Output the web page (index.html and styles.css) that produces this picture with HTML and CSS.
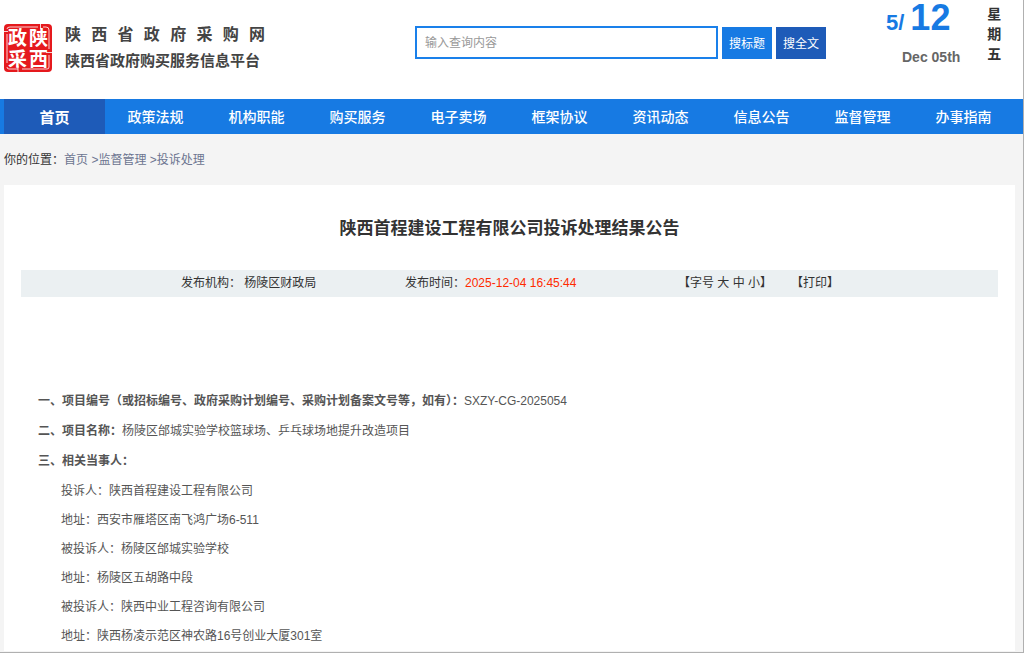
FILE: index.html
```html
<!DOCTYPE html>
<html lang="zh-CN">
<head>
    <meta charset="UTF-8">
    <meta name="viewport" content="width=device-width, initial-scale=1.0">
    <title>陕西省政府采购网</title>
    <link rel="stylesheet" href="styles.css">
</head>
<body>
    <header class="header">
        <div class="logo">
            <svg class="seal" viewBox="0 0 48 48" width="48" height="48">
                <rect x="0" y="0" width="48" height="48" rx="4" fill="#e5191d"/>
                <path d="M0 7.500H4M3 10V39M3 43Q3 45 5 45H14M14 42V48M18 45H43Q45 45 45 43V31M42 28.500H48M45 25V6Q45 3 42 3H39M36.500 0V5M34 3H6Q3 3 3 5" fill="none" stroke="#fff" stroke-width="1" stroke-opacity="0.8"/>
                <g class="seal-text">
                    <text x="4" y="21">政</text>
                    <text x="25" y="21">陕</text>
                    <text x="4" y="42">采</text>
                    <text x="25" y="42">西</text>
                </g>
            </svg>
            <div class="logo-text">
                <p class="site-name">陕 西 省 政 府 采 购 网</p>
                <p>陕西省政府购买服务信息平台</p>
            </div>
        </div>

        <form class="search">
            <input type="text" class="search-input" placeholder="输入查询内容" aria-label="输入查询内容">
            <button type="button" class="btn">搜标题</button>
            <button type="button" class="btn btn-dark">搜全文</button>
        </form>

        <div class="date">
            <div class="date-main">
                <p class="day">5/<span class="month">12</span></p>
                <p class="date-en">Dec 05th</p>
            </div>
            <p class="weekday">星期五</p>
        </div>
    </header>

    <nav class="nav">
        <a href="#" class="active">首页</a>
        <a href="#">政策法规</a>
        <a href="#">机构职能</a>
        <a href="#">购买服务</a>
        <a href="#">电子卖场</a>
        <a href="#">框架协议</a>
        <a href="#">资讯动态</a>
        <a href="#">信息公告</a>
        <a href="#">监督管理</a>
        <a href="#">办事指南</a>
    </nav>

    <div class="breadcrumb">
        你的位置：<a href="#">首页</a> <span>&gt;</span><a href="#">监督管理</a> <span>&gt;</span><a href="#">投诉处理</a>
    </div>

    <main class="main">
        <h1>陕西首程建设工程有限公司投诉处理结果公告</h1>

        <div class="info">
            <span>发布机构： 杨陵区财政局</span>
            <span>发布时间：<time class="time">2025-12-04 16:45:44</time></span>
            <span>【字号 <a href="#">大</a> <a href="#">中</a> <a href="#">小</a>】</span>
            <span>【<a href="#">打印</a>】</span>
        </div>

        <article class="content">
            <p class="item"><strong>一、项目编号（或招标编号、政府采购计划编号、采购计划备案文号等，如有）：</strong>SXZY-CG-2025054</p>
            <p class="item"><strong>二、项目名称：</strong>杨陵区邰城实验学校篮球场、乒乓球场地提升改造项目</p>
            <p class="item"><strong>三、相关当事人：</strong></p>
            <div class="parties">
                <p>投诉人：陕西首程建设工程有限公司</p>
                <p>地址：西安市雁塔区南飞鸿广场6-511</p>
                <p>被投诉人：杨陵区邰城实验学校</p>
                <p>地址：杨陵区五胡路中段</p>
                <p>被投诉人：陕西中业工程咨询有限公司</p>
                <p>地址：陕西杨凌示范区神农路16号创业大厦301室</p>
            </div>
        </article>
    </main>
</body>
</html>
```
FILE: styles.css
```css
* {
    box-sizing: border-box;
}
body {
    margin: 0;
    min-height: 100vh;
    font-family: "Liberation Sans", "Noto Sans CJK SC", sans-serif;
    font-size: 12px;
    color: #333;
    background-color: #f4f4f4;
    border-right: 1px solid #b0b0b0;
    border-bottom: 1px solid #b0b0b0;
}
p, h1 {
    margin: 0;
}
a {
    color: inherit;
    text-decoration: none;
}

/* 顶部 */
.header {
    display: grid;
    grid-template-columns: 411px 1fr 138px;
    height: 99px;
    padding-left: 4px;
    background-color: #fff;
}
.logo {
    display: flex;
    align-items: flex-start;
    gap: 13px;
    padding-top: 24px;
}
.seal-text {
    font-size: 19px;
    font-weight: bold;
    fill: #fff;
}
.logo-text {
    width: 200px;
    margin-top: -2px;
    font-size: 15px;
    font-weight: bold;
    line-height: 26px;
    color: #444;
}
.logo-text .site-name {
    font-size: 16px;
    text-align-last: justify;
}
.search {
    display: flex;
    align-items: flex-start;
    gap: 4px;
    padding-top: 26px;
}
.search-input {
    width: 303px;
    height: 33px;
    padding: 0 8px;
    border: 2px solid #1a80ea;
    font: inherit;
}
.search-input::placeholder {
    color: #999;
}
.btn {
    width: 50px;
    height: 32px;
    margin-top: 1px;
    padding: 0 0 2px;
    border: none;
    font: inherit;
    color: #fff;
    background-color: #177ae3;
    cursor: pointer;
}
.btn-dark {
    background-color: #1e5bb8;
}
.date {
    display: flex;
    gap: 27px;
    font-weight: bold;
}
.day {
    padding-left: 1px;
    font-size: 22px;
    line-height: 36px;
    color: #177ae3;
}
.month {
    margin-left: 6px;
    font-size: 36px;
}
.date-en {
    margin-top: 7px;
    padding-left: 17px;
    font-size: 14px;
    line-height: 18px;
    color: #666;
}
.weekday {
    width: 14px;
    padding-top: 4px;
    font-size: 14px;
    line-height: 20px;
}

/* 导航 */
.nav {
    display: flex;
    padding: 0 9px 0 4px;
    background-color: #177ae3;
}
.nav a {
    flex: 1;
    padding-top: 2px;
    font-size: 14px;
    font-weight: 500;
    line-height: 33px;
    text-align: center;
    color: #fff;
}
.nav .active {
    font-size: 15px;
    font-weight: bold;
    background-color: #1e5bb8;
}

.breadcrumb {
    padding: 16px 4px 15px;
    line-height: 20px;
}
.breadcrumb a, .breadcrumb span {
    color: #6c7590;
}

/* 公告正文 */
.main {
    margin: 0 8px 0 4px;
    padding: 0 17px;
    background-color: #fff;
}
.main h1 {
    padding: 29px 0 26px;
    font-size: 17px;
    line-height: 30px;
    text-align: center;
}
.info {
    display: grid;
    grid-template-columns: 224px 273px 113px auto;
    justify-content: start;
    padding-left: 160px;
    line-height: 27px;
    background-color: #ebf0f2;
}
.time {
    color: #ff2a00;
}
.content {
    padding: 89px 17px 0;
    line-height: 29px;
    color: #555;
}
.item {
    line-height: 30px;
}
.parties {
    padding: 1px 0 0 23px;
}
```
